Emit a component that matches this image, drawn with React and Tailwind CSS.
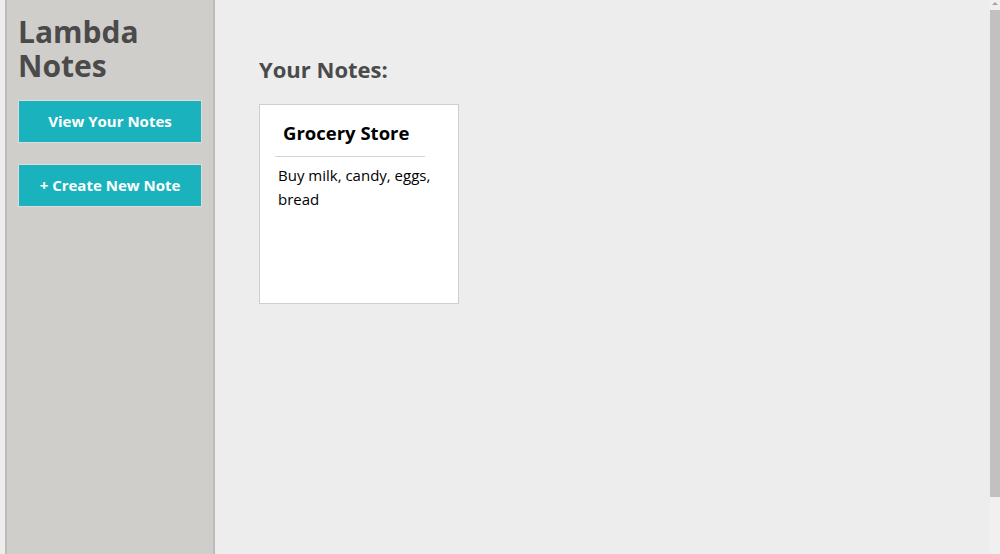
import React from 'react';

/* Lambda Notes: sidebar with nav buttons + grid of note cards. */

const NOTES = [
  { id: 1, title: 'Grocery Store', body: 'Buy milk, candy, eggs, bread' },
];

const FONT = { fontFamily: '"Open Sans", "Noto Sans", sans-serif' };

function NavButton({ children }) {
  return (
    <button className="block w-[184px] h-[43px] border border-[#dcdcdc] bg-[#1ab3bd] text-white text-[15px] font-bold">
      {children}
    </button>
  );
}

function NoteCard({ note }) {
  return (
    <div className="w-[200px] h-[200px] border border-[#cfcfcf] bg-white px-[15px] pt-[15px]">
      <h3 className="pl-[8px] text-[18.5px] font-bold text-black leading-[25px]">{note.title}</h3>
      <hr className="mt-[11px] w-[150px] border-t border-[#d6d6d6]" />
      <p className="mt-[6px] pl-[3px] pr-[10px] text-[15px] leading-[24px] text-black">{note.body}</p>
    </div>
  );
}

// the window's scrollbar, as it shows in the screenshot
function Scrollbar() {
  return (
    <div className="fixed right-0 top-0 h-[554px] w-[10px] bg-[#f0f0f0]">
      <div className="mx-auto mt-[2px] h-0 w-0 border-x-[3px] border-b-[3px] border-x-transparent border-b-[#a3a3a3]" />
      <div className="mt-[5px] h-[487px] w-[10px] bg-[#c1c1c1]" />
    </div>
  );
}

export default function App() {
  return (
    <div style={FONT} className="flex min-h-[600px] bg-[#ededed] pl-[5px] pr-[10px]">
      <aside className="w-[210px] shrink-0 border-x-2 border-[#bdbcba] bg-[#d0cecb] pl-[11px] pr-[10px] pt-[15px]">
        <h1 className="text-[30px] font-bold leading-[34px] text-[#4a4a4a]">
          Lambda
          <br />
          Notes
        </h1>
        <div className="mt-[17px] flex flex-col gap-[21px]">
          <NavButton>View Your Notes</NavButton>
          <NavButton>+ Create New Note</NavButton>
        </div>
      </aside>
      <main className="flex-1 pl-[44px] pt-[54px]">
        <h2 className="text-[22px] font-bold leading-[30px] text-[#4a4a4a]">Your Notes:</h2>
        <div className="mt-[20px] flex flex-wrap gap-[20px]">
          {NOTES.map((n) => (
            <NoteCard key={n.id} note={n} />
          ))}
        </div>
      </main>
      <Scrollbar />
    </div>
  );
}
